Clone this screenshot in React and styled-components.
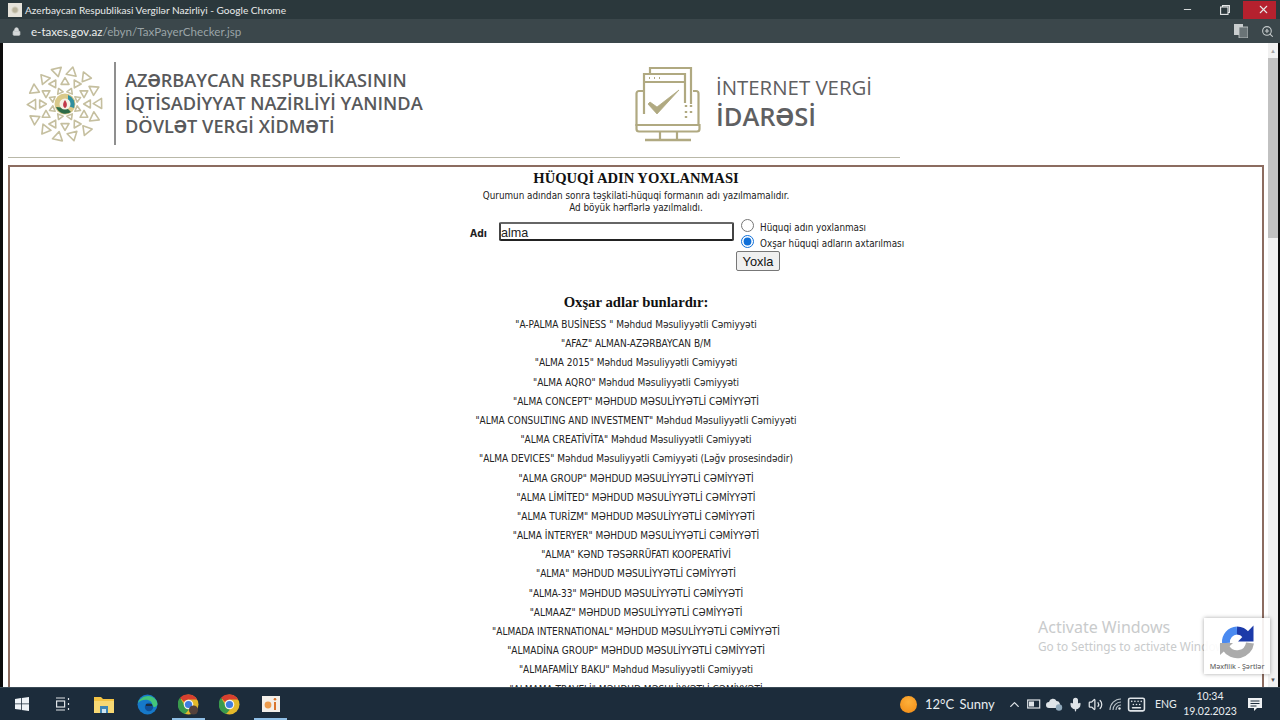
import React from "react";
import styled, { createGlobalStyle } from "styled-components";
import { ChevronUp, Mic, Volume2, Keyboard, Lock, ZoomIn, Minus, X } from "lucide-react";

const GlobalStyle = createGlobalStyle`
  html, body { margin: 0; padding: 0; height: 100%; overflow: hidden; background: #fff; }
  #root { height: 100%; }
  * { box-sizing: border-box; }
`;

const tahoma = `"DejaVu Sans Condensed", "DejaVu Sans", sans-serif`;
const segoe = `Lato, "Noto Sans", sans-serif`;

const Screen = styled.div`
  width: 1280px;
  height: 720px;
  display: flex;
  flex-direction: column;
  overflow: hidden;
  font-family: ${segoe};
`;

const TitleBar = styled.div`
  height: 19px;
  flex: none;
  display: flex;
  align-items: center;
  background: #2b383c;
  color: #e8eaea;
  font-family: ${segoe};
  font-size: 10.1px;
  padding-left: 8px;
`;

const Favicon = styled.span`
  width: 14px;
  height: 14px;
  margin-right: 3px;
  background: radial-gradient(circle, #b8b29a 0 2px, #e6e3da 4px);
`;

const WindowButtons = styled.div`
  margin-left: auto;
  display: flex;
  align-items: center;
  height: 100%;
  padding-right: 4px;
`;

const WinButton = styled.div`
  width: ${(p) => p.$w}px;
  height: 18px;
  display: flex;
  align-items: center;
  justify-content: ${(p) => (p.$close ? "flex-end" : "center")};
  padding-right: ${(p) => (p.$close ? "6px" : "0")};
  background: ${(p) => (p.$close ? "#b5212e" : "transparent")};
  color: #e6e8e8;
`;

const AddressBar = styled.div`
  height: 24px;
  flex: none;
  display: flex;
  align-items: center;
  background: #3b474b;
  padding: 0 6px 0 12px;
  color: #d5d9da;
  font-family: ${segoe};
  font-size: 11.6px;
`;

const Url = styled.span`
  margin-left: 10px;
  color: #9aa4a7;
  b { font-weight: 400; color: #eceeee; }
`;

const BarTools = styled.div`
  margin-left: auto;
  display: flex;
  align-items: center;
  gap: 13px;
  color: #c5cacb;
`;

const Viewport = styled.div`
  position: relative;
  flex: 1;
  min-height: 0;
  display: flex;
  background: #fff;
  overflow: hidden;
  border-left: 3px solid #0c0c0c;
  border-right: 2px solid #0c0c0c;
`;

const Page = styled.main`
  flex: 1;
  min-width: 0;
  padding: 0 6px 0 5px;
`;

const Brand = styled.header`
  height: 115px;
  width: 892px;
  display: flex;
  align-items: center;
  padding: 7px 0 0 18px;
  border-bottom: 1px solid #b9b8a8;
`;

const AgencyLogo = styled.div`
  width: 609px;
  display: flex;
  align-items: center;
  flex: none;
`;

const VerticalRule = styled.span`
  width: 2px;
  height: 83px;
  margin: 0 9px 0 10px;
  background: #8f8f8f;
`;

const AgencyName = styled.div`
  font-family: "Open Sans", sans-serif;
  font-weight: 600;
  font-size: 18.2px;
  line-height: 23px;
  color: #58595b;
  white-space: nowrap;
`;

const ServiceLogo = styled.div`
  display: flex;
  align-items: center;
  gap: 15px;
`;

const ServiceName = styled.div`
  font-family: "Open Sans", sans-serif;
  color: #5f6062;
  font-size: 20.4px;
  line-height: 24px;
  white-space: nowrap;
  span { display: block; font-size: 25.5px; line-height: 34px; font-weight: 600; }
`;

const Panel = styled.section`
  margin-top: 7px;
  padding-top: 1px;
  width: 1256px;
  height: 600px;
  border: 2px solid #8c6c60;
  border-bottom: 0;
  text-align: center;
  overflow: hidden;
`;

const Heading = styled.h2`
  margin: 0;
  font-family: "Liberation Serif", serif;
  font-weight: 700;
  font-size: 14.6px;
  line-height: 20px;
  color: #111;
`;

const Hint = styled.p`
  margin: 0;
  font-family: ${tahoma};
  font-size: 9.8px;
  line-height: 12px;
  color: #222;
  padding-top: ${(p) => (p.$first ? "2px" : "0")};
`;

const CheckForm = styled.form`
  display: flex;
  align-items: flex-start;
  margin: 7px 0 0 460px;
  text-align: left;
  height: 56px;
`;

const NameLabel = styled.label`
  width: 29px;
  flex: none;
  margin-top: 6px;
  font-family: ${tahoma};
  font-weight: 700;
  font-size: 10.3px;
  color: #222;
`;

const NameInput = styled.input`
  width: 235px;
  height: 19px;
  margin-top: 1px;
  padding: 2px 0 0;
  flex: none;
  border: 2px solid #444;
  border-radius: 2px;
  border-bottom-color: #222;
  border-top-color: #666;
  font-family: "Liberation Sans", sans-serif;
  font-size: 12.6px;
  color: #222;
  outline: none;
`;

const Options = styled.div`
  margin: -2px 0 0 2px;
  display: flex;
  flex-direction: column;
`;

const RadioRow = styled.label`
  height: 16px;
  display: flex;
  align-items: center;
  font-family: ${tahoma};
  font-size: 9.8px;
  color: #222;
  white-space: nowrap;
  padding-left: 5px;
  input { margin: 0 6px 4px 0; width: 13px; height: 13px; accent-color: #0f6fd8; }
`;

const SubmitButton = styled.button`
  width: 44px;
  height: 20px;
  margin-top: 0;
  padding: 0;
  background: #f0f0f0;
  border: 1px solid #777;
  border-radius: 2px;
  font-family: "Liberation Sans", sans-serif;
  font-size: 12.8px;
  color: #111;
`;

const SubHeading = styled(Heading)`
  margin-top: 16px;
  font-size: 14.7px;
  line-height: 18px;
`;

const Results = styled.ul`
  list-style: none;
  margin: 4px 0 0;
  padding: 0;
`;

const ResultRow = styled.li`
  height: 19.2px;
  line-height: 19.2px;
  font-family: ${tahoma};
  font-size: 10px;
  color: #222;
  white-space: nowrap;
`;

const Scrollbar = styled.div`
  width: 10px;
  flex: none;
  display: flex;
  flex-direction: column;
  align-items: center;
  background: #f1f1f1;
`;

const ScrollArrow = styled.span`
  height: 15px;
  flex: none;
  color: ${(p) => p.$color};
  font-size: 6px;
  line-height: 15px;
  ${(p) => p.$end && "margin-top: auto;"}
`;

const ScrollThumb = styled.div`
  width: 100%;
  height: 180px;
  background: #c1c1c1;
`;

const Watermark = styled.div`
  position: absolute;
  left: 1035px;
  top: 573px;
  white-space: nowrap;
  font-family: "Noto Sans", sans-serif;
  color: #c9cbcc;
  font-size: 11.8px;
  line-height: 20px;
  strong { display: block; font-weight: 400; font-size: 16px; line-height: 22px; margin-bottom: -2px; }
`;

const RecaptchaBadge = styled.aside`
  position: absolute;
  left: 1201px;
  top: 575px;
  width: 66px;
  height: 56px;
  background: rgba(255, 255, 255, 0.9);
  box-shadow: 0 0 4px rgba(0, 0, 0, 0.35);
  display: flex;
  flex-direction: column;
  align-items: center;
  font-family: "Noto Sans", sans-serif;
  font-size: 7.2px;
  color: #555;
  white-space: nowrap;
  svg { margin-top: 6px; margin-bottom: 1px; }
`;

const Taskbar = styled.footer`
  height: 33px;
  flex: none;
  display: flex;
  align-items: center;
  background: #1c2c3b;
  border-top: 1px solid #3a4a55;
  color: #e9edf0;
  font-family: ${segoe};
`;

const TaskSlot = styled.div`
  position: relative;
  width: ${(p) => p.$w}px;
  height: 100%;
  flex: none;
  display: flex;
  align-items: center;
  justify-content: center;
  &::after {
    content: "";
    position: absolute;
    left: 4px;
    right: 4px;
    bottom: 0;
    height: 2px;
    background: ${(p) => (p.$open ? "#8fbfe6" : "transparent")};
  }
`;

const Tray = styled.div`
  margin-left: auto;
  height: 100%;
  display: flex;
  align-items: center;
  padding-right: 17px;
`;

const Weather = styled.div`
  display: flex;
  align-items: center;
  gap: 8px;
  font-size: 13px;
  width: 107px;
  white-space: nowrap;
  word-spacing: 2px;
`;

const Sun = styled.span`
  width: 17px;
  height: 17px;
  border-radius: 50%;
  flex: none;
  background: radial-gradient(circle at 50% 35%, #fdb03a, #f18a14);
`;

const TrayIcons = styled.div`
  display: flex;
  align-items: center;
  gap: 5px;
  color: #dfe4e8;
  margin-right: 9px;
`;

const TrayLang = styled.span`
  font-size: 10.5px;
  width: 26px;
`;

const Clock = styled.div`
  width: 58px;
  text-align: center;
  font-size: 10.5px;
  line-height: 15px;
`;

const NoticeWrap = styled.div`
  margin-left: 8px;
  display: flex;
`;

const ringShapes = [
  { r: 14, n: 8, s: 2.8, off: 22.5, flip: false },
  { r: 22.5, n: 12, s: 3.8, off: 0, flip: true },
  { r: 33, n: 14, s: 4.8, off: 12, flip: true },
];

function Emblem() {
  return (
    <svg width="78" height="80" viewBox="-39 -40 78 80" fill="none">
      {ringShapes.map((ring) =>
        Array.from({ length: ring.n }).map((_, i) => {
          const a = (360 / ring.n) * i + ring.off;
          const spin = ring.flip && i % 2 ? 180 : 0;
          return (
            <polygon
              key={`${ring.r}-${i}`}
              transform={`rotate(${a}) translate(0 ${-ring.r}) rotate(${spin})`}
              points={`0,${-ring.s} ${ring.s * 1.05},${ring.s * 0.75} ${-ring.s * 1.05},${ring.s * 0.75}`}
              stroke="#c5bf9f"
              strokeWidth="1.6"
              strokeLinejoin="round"
            />
          );
        })
      )}
      <circle r="10.5" fill="#d9c98a" />
      <path d="M-9 3A10 10 0 0 0 6 8L2 4Z" fill="#2d6b47" />
      <path d="M3 -9A10 10 0 0 1 9 4L3 2Z" fill="#2f8fa0" />
      <circle r="5.5" fill="#f6f1e6" />
      <path d="M0 -4C2.5 -1 2.5 3 0 4C-2.5 3 -2.5 -1 0 -4Z" fill="#c2384a" />
    </svg>
  );
}

function ServiceIcon() {
  return (
    <svg width="66" height="76" viewBox="0 0 66 76" fill="none" stroke="#b0a981" strokeWidth="2.2">
      <path d="M9 25H4a2.500 2.500 0 0 0-2.500 2.500V59h62V27.500A2.500 2.500 0 0 0 61 25h-3" />
      <path d="M1.500 59v4a2.500 2.500 0 0 0 2.500 2.500h58a2.500 2.500 0 0 0 2.500-2.500v-4z" />
      <path d="M25 66v7M42 66v7" />
      <path d="M10 74h46" strokeWidth="2.600" />
      <path d="M15 8V2h41v36" />
      <path d="M9 48V8h41v29" />
      <path d="M9 16h41" />
      <path d="M14 12h1M19 12h1M24 12h1" />
      <path d="M51 39v2M56 39v2M51 45v2M56 45v2M51 50v2" strokeWidth="2.400" />
      <path d="M13 38l9 10L44 24l-22 17-7-5z" fill="#b0a981" strokeWidth="0.800" />
    </svg>
  );
}

function RecaptchaIcon() {
  return (
    <svg width="36" height="36" viewBox="0 0 36 36" fill="none">
      <path d="M7 19A11.500 11.500 0 0 1 18 6.500" stroke="#4a8af0" strokeWidth="8" />
      <path d="M18 6.500A11.500 11.500 0 0 1 27 11" stroke="#1c3aa9" strokeWidth="8" />
      <path d="M34.500 1.500V17.500H19z" fill="#1c3aa9" />
      <path d="M31 19A13 13 0 0 1 7 24" stroke="#ababab" strokeWidth="8" />
      <path d="M1 19H14L1 31z" fill="#ababab" />
    </svg>
  );
}

function StartIcon() {
  return (
    <svg width="14" height="14" viewBox="0 0 14 14" fill="#eef3f7">
      <path d="M0 2l6-.9V6.500H0zM6.800 1L14 0v6.500H6.800zM0 7.300h6v5.500l-6-.8zM6.800 7.300H14V14l-7.200-1z" />
    </svg>
  );
}

function TaskViewIcon() {
  return (
    <svg width="16" height="14" viewBox="0 0 16 14" fill="none" stroke="#dfe4e8" strokeWidth="1.200">
      <path d="M1 1h9M1 13h9" />
      <rect x="1.600" y="4" width="8" height="6" />
      <path d="M13.500 1v2M13.500 6v2M13.500 11v2" />
    </svg>
  );
}

function FolderIcon() {
  return (
    <svg width="20" height="17" viewBox="0 0 20 17">
      <path d="M0 1h7l2 2h11v14H0z" fill="#f3c344" />
      <path d="M0 5h20v12H0z" fill="#f7d873" />
      <path d="M6 10h8v7H6z" fill="#3f86b5" />
      <path d="M8 13h4v4H8z" fill="#cfe3ef" />
    </svg>
  );
}

function EdgeIcon() {
  return (
    <svg width="21" height="21" viewBox="0 0 21 21">
      <circle cx="10.500" cy="10.500" r="10" fill="#1679c9" />
      <path d="M1 9C3 2 14-1 19 6c2 3 2 6-1 7-3 0-3-1-3-3C15 5 5 4 1 9z" fill="#43c57a" />
      <circle cx="12" cy="13" r="4.200" fill="#0f4f98" />
      <path d="M9 10h6v2H9z" fill="#1c2c3b" />
    </svg>
  );
}

function ChromeIcon({ avatar }) {
  return (
    <svg width="21" height="21" viewBox="0 0 21 21">
      <circle cx="10.500" cy="10.500" r="10" fill="#e3b92b" />
      <path d="M10.500.5a10 10 0 0 1 8.700 5H10.500a5 5 0 0 0-4.400 2.600L2 3.800A10 10 0 0 1 10.500.5z" fill="#d8402f" />
      <path d="M2 3.800l4.300 7.300a5 5 0 0 0 4.800 4.300L7 20A10 10 0 0 1 2 3.800z" fill="#3a9a4c" />
      <circle cx="10.500" cy="10.500" r="4.800" fill="#f3f3f3" />
      <circle cx="10.500" cy="10.500" r="3.600" fill="#3f7de0" />
      {avatar && <circle cx="15.500" cy="16" r="4.600" fill="#54423c" />}
    </svg>
  );
}

function AppIcon() {
  return (
    <svg width="18" height="16" viewBox="0 0 18 16">
      <rect width="18" height="16" fill="#f3efe9" />
      <circle cx="6" cy="9" r="3.400" fill="#ec9b4c" />
      <path d="M12 6h2v8h-2z" fill="#d9742c" />
      <circle cx="13" cy="3.200" r="1.300" fill="#d9742c" />
    </svg>
  );
}

function CloudIcon() {
  return (
    <svg width="17" height="14" viewBox="0 0 17 14">
      <path d="M3 11a3 3 0 0 1 0-6 4 4 0 0 1 7.500-1A3.500 3.500 0 0 1 13 10v1z" fill="#dfe4e8" />
      <circle cx="13" cy="10.500" r="3.200" fill="#8fa8ba" />
    </svg>
  );
}

function BatteryIcon() {
  return (
    <svg width="14" height="10" viewBox="0 0 14 10" fill="none">
      <rect x="0.700" y="1" width="12" height="8" stroke="#dfe4e8" strokeWidth="1.200" />
      <rect x="2" y="2.500" width="5" height="5" fill="#dfe4e8" />
    </svg>
  );
}

function WifiIcon() {
  return (
    <svg width="14" height="14" viewBox="0 0 14 14" fill="none" stroke="#b9c2c9" strokeWidth="1.100">
      <path d="M2 13A11 11 0 0 1 13 2M5 13a8 8 0 0 1 8-8M8 13a5 5 0 0 1 5-5" />
      <circle cx="11.500" cy="11.500" r="1.200" fill="#dfe4e8" stroke="none" />
    </svg>
  );
}

function NoticeIcon() {
  return (
    <svg width="16" height="15" viewBox="0 0 16 15" fill="#eef1f3">
      <path d="M1 1h14v10h-5l-3 3v-3H1z" />
      <path d="M3.500 4h9M3.500 6.500h9M3.500 9h6" stroke="#1c2c3b" strokeWidth="1" />
    </svg>
  );
}

function TranslateIcon() {
  return (
    <svg width="14" height="14" viewBox="0 0 14 14">
      <rect width="9" height="11" fill="#c9cdce" />
      <rect x="5" y="3" width="9" height="11" fill="#6a7477" stroke="#c9cdce" strokeWidth="0.800" />
    </svg>
  );
}

function RestoreIcon() {
  return (
    <svg width="10" height="10" viewBox="0 0 10 10" fill="none" stroke="#e6e8e8" strokeWidth="1.100">
      <rect x="0.600" y="2" width="7.400" height="7.400" />
      <path d="M2.500 2V.6h6.900v6.900H8" />
    </svg>
  );
}

const companies = [
  '"A-PALMA BUSİNESS " Məhdud Məsuliyyətli Cəmiyyəti',
  '"AFAZ" ALMAN-AZƏRBAYCAN B/M',
  '"ALMA 2015" Məhdud Məsuliyyətli Cəmiyyəti',
  '"ALMA AQRO" Məhdud Məsuliyyətli Cəmiyyəti',
  '"ALMA CONCEPT" MƏHDUD MƏSULİYYƏTLİ CƏMİYYƏTİ',
  '"ALMA CONSULTING AND INVESTMENT" Məhdud Məsuliyyətli Cəmiyyəti',
  '"ALMA CREATİVİTA" Məhdud Məsuliyyətli Cəmiyyəti',
  '"ALMA DEVICES" Məhdud Məsuliyyətli Cəmiyyəti (Ləğv prosesindədir)',
  '"ALMA GROUP" MƏHDUD MƏSULİYYƏTLİ CƏMİYYƏTİ',
  '"ALMA LİMİTED" MƏHDUD MƏSULİYYƏTLİ CƏMİYYƏTİ',
  '"ALMA TURİZM" MƏHDUD MƏSULİYYƏTLİ CƏMİYYƏTİ',
  '"ALMA İNTERYER" MƏHDUD MƏSULİYYƏTLİ CƏMİYYƏTİ',
  '"ALMA" KƏND TƏSƏRRÜFATI KOOPERATİVİ',
  '"ALMA" MƏHDUD MƏSULİYYƏTLİ CƏMİYYƏTİ',
  '"ALMA-33" MƏHDUD MƏSULİYYƏTLİ CƏMİYYƏTİ',
  '"ALMAAZ" MƏHDUD MƏSULİYYƏTLİ CƏMİYYƏTİ',
  '"ALMADA INTERNATIONAL" MƏHDUD MƏSULİYYƏTLİ CƏMİYYƏTİ',
  '"ALMADİNA GROUP" MƏHDUD MƏSULİYYƏTLİ CƏMİYYƏTİ',
  '"ALMAFAMİLY BAKU" Məhdud Məsuliyyətli Cəmiyyəti',
  '"ALMAMA TRAVELİ" MƏHDUD MƏSULİYYƏTLİ CƏMİYYƏTİ',
];

export default function App() {
  return (
    <Screen>
      <GlobalStyle />
      <TitleBar>
        <Favicon />
        Azerbaycan Respublikasi Vergilər Nazirliyi - Google Chrome
        <WindowButtons>
          <WinButton $w={37}><Minus size={11} /></WinButton>
          <WinButton $w={37}><RestoreIcon /></WinButton>
          <WinButton $w={33} $close><X size={13} /></WinButton>
        </WindowButtons>
      </TitleBar>
      <AddressBar>
        <Lock size={9} fill="#d5d9da" />
        <Url><b>e-taxes.gov.az</b>/ebyn/TaxPayerChecker.jsp</Url>
        <BarTools>
          <TranslateIcon />
          <ZoomIn size={13} />
        </BarTools>
      </AddressBar>
      <Viewport>
        <Page>
          <Brand>
            <AgencyLogo>
              <Emblem />
              <VerticalRule />
              <AgencyName>
                AZƏRBAYCAN RESPUBLİKASININ<br />
                İQTİSADİYYAT NAZİRLİYİ YANINDA<br />
                DÖVLƏT VERGİ XİDMƏTİ
              </AgencyName>
            </AgencyLogo>
            <ServiceLogo>
              <ServiceIcon />
              <ServiceName>
                İNTERNET VERGİ
                <span>İDARƏSİ</span>
              </ServiceName>
            </ServiceLogo>
          </Brand>
          <Panel>
            <Heading>HÜQUQİ ADIN YOXLANMASI</Heading>
            <Hint $first>Qurumun adından sonra təşkilati-hüquqi formanın adı yazılmamalıdır.</Hint>
            <Hint>Ad böyük hərflərlə yazılmalıdı.</Hint>
            <CheckForm onSubmit={(e) => e.preventDefault()}>
              <NameLabel>Adı</NameLabel>
              <NameInput defaultValue="alma" />
              <Options>
                <RadioRow><input type="radio" name="mode" />Hüquqi adın yoxlanması</RadioRow>
                <RadioRow><input type="radio" name="mode" defaultChecked />Oxşar hüquqi adların axtarılması</RadioRow>
                <SubmitButton>Yoxla</SubmitButton>
              </Options>
            </CheckForm>
            <SubHeading>Oxşar adlar bunlardır:</SubHeading>
            <Results>
              {companies.map((name) => (
                <ResultRow key={name}>{name}</ResultRow>
              ))}
            </Results>
          </Panel>
        </Page>
        <Scrollbar>
          <ScrollArrow $color="#a3a3a3">▲</ScrollArrow>
          <ScrollThumb />
          <ScrollArrow $end $color="#505050">▼</ScrollArrow>
        </Scrollbar>
        <Watermark>
          <strong>Activate Windows</strong>
          Go to Settings to activate Windows.
        </Watermark>
        <RecaptchaBadge>
          <RecaptchaIcon />
          Məxfilik - Şərtlər
        </RecaptchaBadge>
      </Viewport>
      <Taskbar>
        <TaskSlot $w={44}><StartIcon /></TaskSlot>
        <TaskSlot $w={38}><TaskViewIcon /></TaskSlot>
        <TaskSlot $w={44}><FolderIcon /></TaskSlot>
        <TaskSlot $w={42}><EdgeIcon /></TaskSlot>
        <TaskSlot $w={41} $open><ChromeIcon avatar /></TaskSlot>
        <TaskSlot $w={41}><ChromeIcon /></TaskSlot>
        <TaskSlot $w={41} $open><AppIcon /></TaskSlot>
        <Tray>
          <Weather><Sun />12°C Sunny</Weather>
          <TrayIcons>
            <ChevronUp size={15} />
            <BatteryIcon />
            <CloudIcon />
            <Mic size={15} fill="#dfe4e8" />
            <Volume2 size={15} />
            <WifiIcon />
            <Keyboard size={19} />
          </TrayIcons>
          <TrayLang>ENG</TrayLang>
          <Clock>10:34<br />19.02.2023</Clock>
          <NoticeWrap><NoticeIcon /></NoticeWrap>
        </Tray>
      </Taskbar>
    </Screen>
  );
}
